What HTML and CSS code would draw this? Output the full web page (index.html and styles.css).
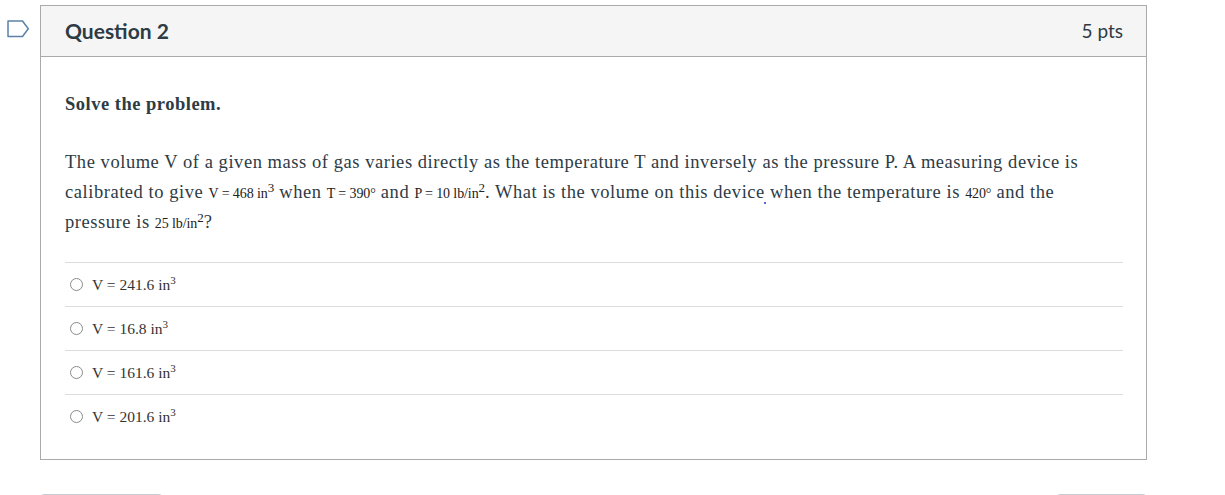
FILE: index.html
```html
<!DOCTYPE html>
<html>
<head>
<meta charset="utf-8">
<link rel="stylesheet" href="styles.css">
</head>
<body>
<div class="page">
  <div class="flag-col">
    <svg class="flag" width="23" height="18" viewBox="0 0 23 18">
      <path d="M1 1 H15.5 L21.3 8.75 L15.5 16.5 H1 Z" fill="none" stroke="#5b81a8" stroke-width="1.5" stroke-linejoin="round"/>
    </svg>
  </div>
  <div class="main">
    <div class="card">
      <div class="card-header">
        <span class="title">Question 2</span>
        <span class="pts">5 pts</span>
      </div>
      <div class="card-body">
        <p class="lead">Solve the problem.</p>
        <p class="question">The volume V of a given mass of gas varies directly as the temperature T and inversely as the pressure P. A measuring device is calibrated to give <span class="m">V = 468 in<sup>3</sup></span> when <span class="m">T = 390°</span> and <span class="m">P = 10 lb/in<sup>2</sup></span>. What is the volume on this device<span class="dotwrap"><span class="dot"></span> </span>when the temperature is <span class="m">420°</span> and the pressure is <span class="m">25 lb/in<sup>2</sup></span>?</p>
        <div class="answers">
          <label class="answer"><span class="radio"></span><span class="atext">V = 241.6 in<sup>3</sup></span></label>
          <label class="answer"><span class="radio"></span><span class="atext">V = 16.8 in<sup>3</sup></span></label>
          <label class="answer"><span class="radio"></span><span class="atext">V = 161.6 in<sup>3</sup></span></label>
          <label class="answer"><span class="radio"></span><span class="atext">V = 201.6 in<sup>3</sup></span></label>
        </div>
      </div>
    </div>
    <div class="nav">
      <span class="btn btn-left"></span>
      <span class="btn btn-right"></span>
    </div>
  </div>
</div>
</body>
</html>
```
FILE: styles.css
```css
html, body {
  margin: 0;
  padding: 0;
  background: #fff;
}
body {
  font-family: "Liberation Serif", serif;
  color: #2d3b45;
  overflow: hidden;
}
.page {
  display: flex;
  padding-top: 5px;
}
.flag-col {
  width: 40px;
  flex: none;
}
.flag {
  display: block;
  margin: 15px 0 0 7px;
}
.main {
  width: 1107px;
}
.card {
  border: 1px solid #aaaaaa;
}
.card-header {
  height: 51px;
  box-sizing: border-box;
  padding: 0 23px 2px 24px;
  background: #f5f5f5;
  border-bottom: 1px solid #aaaaaa;
  display: flex;
  align-items: center;
  justify-content: space-between;
  font-family: Lato, sans-serif;
}
.title {
  font-size: 21px;
  font-weight: 700;
  color: #2d3b45;
}
.pts {
  font-size: 19px;
  color: #2d3b45;
}
.card-body {
  padding: 35px 23px 21px 24px;
}
.lead {
  margin: 0;
  font-weight: 700;
  font-size: 18.5px;
  letter-spacing: 0.5px;
  line-height: 24px;
}
.question {
  margin: 31px 0 0;
  font-size: 18.5px;
  letter-spacing: 0.55px;
  line-height: 30px;
}
.m {
  font-family: "Liberation Serif", serif;
  font-size: 14px;
  line-height: 1;
  letter-spacing: -0.1px;
  color: #222;
  white-space: nowrap;
}
.m sup {
  font-size: 13px;
  line-height: 1;
  vertical-align: baseline;
  position: relative;
  top: -6px;
}
.dotwrap {
  position: relative;
}
.dot {
  position: absolute;
  left: -1px;
  top: 20px;
  width: 2px;
  height: 2px;
  border-radius: 50%;
  background: #2233cc;
}
.answers {
  margin-top: 25px;
}
.answer {
  display: flex;
  align-items: center;
  height: 43px;
  border-top: 1px solid #dddddd;
  padding-left: 5px;
  font-size: 15.5px;
  color: #333;
}
.radio {
  width: 13px;
  height: 13px;
  border: 1px solid #8a8a8a;
  border-radius: 50%;
  box-sizing: border-box;
  margin-right: 9px;
}
.atext sup {
  font-size: 11px;
  line-height: 0;
}
.nav {
  display: flex;
  justify-content: space-between;
  margin-top: 34px;
}
.btn {
  display: block;
  height: 12px;
  background: #f5f5f5;
  border: 1px solid #c7cdd1;
  border-radius: 4px;
}
.btn-left { width: 121px; }
.btn-right { width: 89px; }
```
